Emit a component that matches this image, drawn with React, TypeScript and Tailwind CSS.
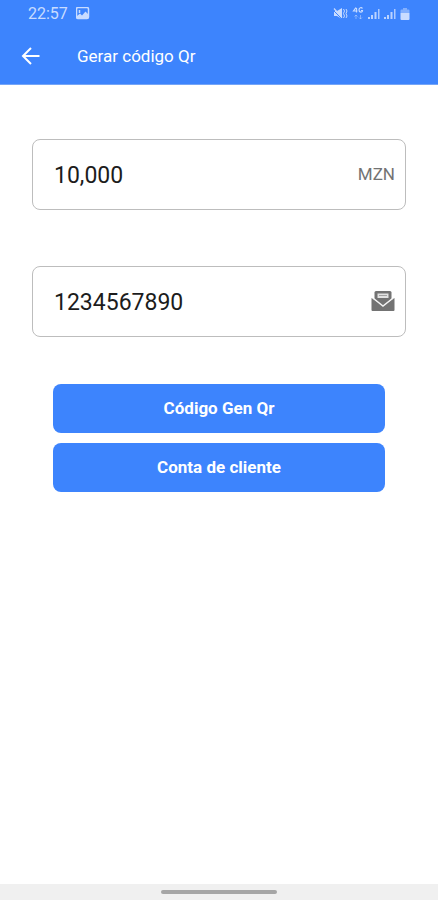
import { useState } from "react";

const StatusIcons = () => (
  <div className="flex items-center gap-1">
    {/* Muted / vibrate */}
    <svg width="15" height="14" viewBox="0 0 15 14" fill="currentColor">
      <path d="M1 4h3l5-3v11L4 9H1z" />
      <path d="M0 3l9 9" stroke="#3d84fd" strokeWidth="1" />
      <path d="M1 1.500l8 9" stroke="currentColor" strokeWidth="1.200" />
      <path
        d="M10.500 2l1 2-1 2.500 1 2.500-1 2M13 2l1 2-1 2.500 1 2.500-1 2"
        fill="none"
        stroke="currentColor"
        strokeWidth="1"
      />
    </svg>
    {/* Mobile data */}
    <svg width="12" height="14" viewBox="0 0 12 14" fill="none" stroke="currentColor">
      <path d="M4 .5L1.500 4h4M4.500 1v4.500M10.500 1.500C9.500 0 7 .5 7 3s3.500 3 3.500 .5H9" strokeWidth="1.200" />
      <path d="M4 12V8M2.500 9.500L4 8l1.500 1.500M8.500 8v4M7 10.500L8.500 12l1.500-1.500" opacity="0.5" />
    </svg>
    <SignalBars />
    <SignalBars />
    {/* Battery */}
    <svg width="10" height="14" viewBox="0 0 10 14" fill="currentColor">
      <path d="M3 1h4v1.500h1.500Q9.500 2.500 9.500 3.500V6h-9V3.500q0-1 1-1H3z" opacity="0.5" />
      <path d="M.5 6h9v6q0 1-1 1h-7q-1 0-1-1z" />
    </svg>
  </div>
);

const SignalBars = () => (
  <svg width="12" height="12" viewBox="0 0 12 12" fill="currentColor">
    <path d="M0 9h2v2H0zM3 7h2v4H3zM6.500 4h2v7h-2z" opacity="0.9" />
    <path d="M10 1h1.500v10H10z" opacity="0.8" />
  </svg>
);

const MailIcon = () => (
  <svg width="24" height="22" viewBox="0 0 24 22">
    {/* Letter */}
    <path
      d="M5 0h14q1.500 0 1.500 1.500V8L12 15 3.500 8V1.500Q3.500 0 5 0z"
      fill="#737373"
    />
    <rect x="6.500" y="2.500" width="11" height="4.500" fill="#e2e2e2" />
    <path d="M8 4.500h8" stroke="#a3a3a3" strokeWidth="1" />
    {/* Envelope */}
    <path
      d="M.5 7L12 14.500 23.500 7v12q0 1-1 1h-21q-1 0-1-1z"
      fill="#737373"
    />
    <path
      d="M2.500 7.500L12 15l9.500-7.500"
      fill="none"
      stroke="#f2f2f2"
      strokeWidth="1.500"
    />
  </svg>
);

export default function GenerateQrScreen() {
  const [amount, setAmount] = useState("10,000");
  const [account, setAccount] = useState("1234567890");

  return (
    <div className="flex min-h-screen flex-col bg-white font-['Roboto',sans-serif]">
      {/* Header */}
      <header className="border-b border-[#75a5f7] bg-[#3d84fd] text-white">
        <div className="flex h-7 items-center justify-between px-7 text-[#c9dcff]">
          <div className="flex items-center gap-2">
            <span className="text-base">22:57</span>
            <svg width="14" height="14" viewBox="0 0 14 14" fill="none">
              <rect x="0.500" y="0.500" width="12" height="11" rx="1.500" stroke="currentColor" strokeWidth="1.500" />
              <path d="M1 11V9l3-2.500 2 2L9.500 4.500 12 7v4z" fill="currentColor" />
              <path d="M3.500 3v3" stroke="currentColor" strokeWidth="1.500" />
            </svg>
          </div>
          <StatusIcons />
        </div>
        <div className="flex h-14 items-center gap-9 px-5">
          <button type="button" aria-label="Voltar">
            <svg
              width="21"
              height="20"
              viewBox="0 0 21 20"
              fill="none"
              stroke="currentColor"
              strokeWidth="2"
            >
              <path d="M19.500 10H3.500M11 2l-8 8 8 8" />
            </svg>
          </button>
          <h1 className="pt-0.5 text-[17px]">Gerar código Qr</h1>
        </div>
      </header>

      {/* Form */}
      <main className="flex-1 px-8 pt-[54px]">
        <form onSubmit={(e) => e.preventDefault()}>
          <label className="flex h-[71px] items-center rounded-lg border border-[#bdbdbd] pl-[21px] pr-[10px]">
            <input
              type="text"
              aria-label="Valor"
              value={amount}
              onChange={(e) => setAmount(e.target.value)}
              className="h-full min-w-0 flex-1 pt-0.5 text-[23px] text-[#1c1c1c] outline-none"
            />
            <span className="text-[17px] text-[#737373]">MZN</span>
          </label>

          <label className="mt-14 flex h-[71px] items-center rounded-lg border border-[#bdbdbd] pl-[21px] pr-[10px]">
            <input
              type="text"
              aria-label="Conta"
              value={account}
              onChange={(e) => setAccount(e.target.value)}
              className="h-full min-w-0 flex-1 pt-0.5 text-[23px] text-[#1c1c1c] outline-none"
            />
            <MailIcon />
          </label>

          <div className="mt-[47px] flex flex-col gap-[10px] px-[21px]">
            <button
              type="submit"
              className="h-[49px] rounded-lg bg-[#3d84fd] text-[17px] font-bold text-white"
            >
              Código Gen Qr
            </button>
            <button
              type="button"
              className="h-[49px] rounded-lg bg-[#3d84fd] text-[17px] font-bold text-white"
            >
              Conta de cliente
            </button>
          </div>
        </form>
      </main>

      {/* Gesture bar */}
      <footer className="flex h-4 items-center justify-center bg-[#f0f0f0]">
        <div className="h-1 w-[116px] rounded-full bg-[#a6a6a6]" />
      </footer>
    </div>
  );
}
